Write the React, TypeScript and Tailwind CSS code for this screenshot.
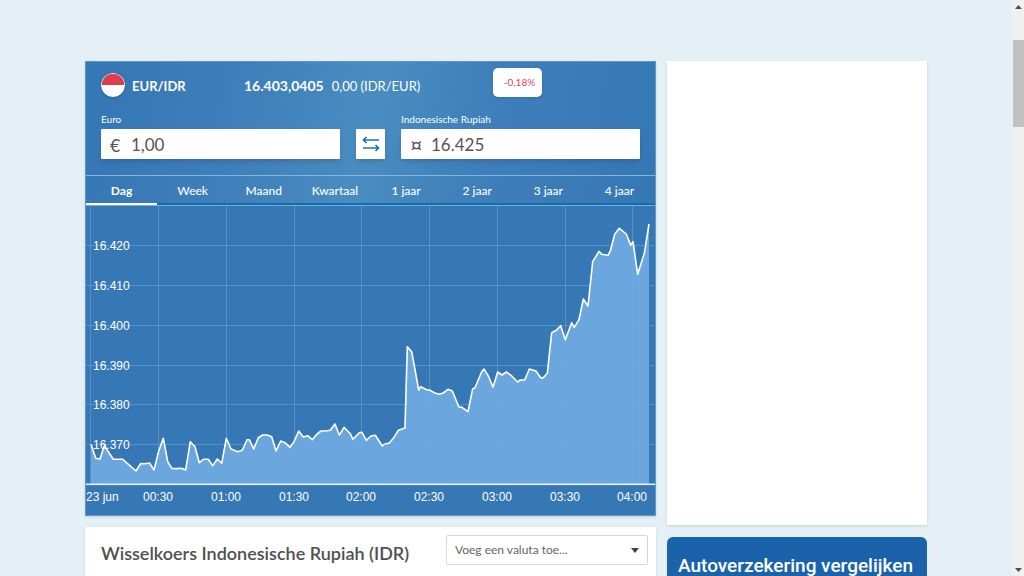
import React, { useState } from "react";

const periods = ["Dag", "Week", "Maand", "Kwartaal", "1 jaar", "2 jaar", "3 jaar", "4 jaar"];

const yTicks = [
  { y: 245, label: "16.420" },
  { y: 285, label: "16.410" },
  { y: 325, label: "16.400" },
  { y: 365, label: "16.390" },
  { y: 404, label: "16.380" },
  { y: 444, label: "16.370" },
];

const xTicks = [
  { x: 90, label: "" },
  { x: 158, label: "00:30" },
  { x: 226, label: "01:00" },
  { x: 294, label: "01:30" },
  { x: 361, label: "02:00" },
  { x: 429, label: "02:30" },
  { x: 497, label: "03:00" },
  { x: 565, label: "03:30" },
  { x: 632, label: "04:00" },
];

const rateLine =
  "91,444.3 95.7,458.3 100,459 104.3,445.7 113.3,459.3 122.7,459.3 136,471 140.7,463.5 145,463.7 149.5,463 154,470 " +
  "158.5,451.7 163.3,438.3 167.7,461.7 172,468.5 176.7,468.6 181.5,468.3 185.7,470 190.3,441.7 195,446.7 199.3,462.7 " +
  "203.7,459.2 208.3,459.2 212.7,465.7 217.3,459 221.7,463.3 226.3,438.3 231,449 237.7,451.7 242.3,450.3 247,439.7 " +
  "249.3,439.7 253.7,449 258.3,437.7 262.7,435 267.3,435 271.7,436.7 276,451 280.7,441 285,442.7 290,447.3 294,441.7 " +
  "298.7,431 303.3,437 307.7,435.7 312.3,439.7 316.7,434.3 321,431 325.7,431 330.3,430.3 335,424 339.3,435 344,427.3 " +
  "350.3,433.7 353,439.3 359.3,432.7 362,432.3 366.3,440.3 371,436 375.3,435.3 382.3,446 384.7,444 389.3,443 " +
  "393.3,438.3 398.3,430.3 405,428 407.3,346.7 411.7,351.7 418.7,390 420.7,386.7 426.7,389.7 430,390.3 434.3,392.7 " +
  "439,394.3 443.3,393 448,389.3 452.3,391 459,407.3 461.3,407 468,411.7 472.7,388.7 475,387.7 481.7,371.7 484,369 " +
  "488.7,376.7 493,387.3 497.7,372 502,375 506.3,372 511,375.3 517.7,382 520.3,380 524.7,380 529.3,369 536,371 " +
  "540.3,377.3 542.7,378.3 547.3,373.3 551.7,332.7 556.3,330.3 560.7,325.7 565.3,339.7 571.7,322.7 574.3,327.3 " +
  "579,319.7 583.3,299 588,306 592.7,261.7 599,251.3 601.7,254.3 608,255.3 610.3,251 614.7,234.3 619.3,228.3 " +
  "626.3,234 630.7,245.3 633,241.7 637.7,274.3 644.3,253.3 649,224";

function RateChart() {
  return (
    <svg
      viewBox="86 206 569 309"
      className="block w-full bg-[#3677b5] font-['Liberation_Sans',sans-serif] text-[12px]"
      role="img"
      aria-label="Koers EUR/IDR"
    >
      <g stroke="#7fb0dc" strokeOpacity="0.45">
        {yTicks.map((t) => (
          <line key={t.y} x1="86" x2="654" y1={t.y + 0.5} y2={t.y + 0.5} />
        ))}
        {xTicks.map((t) => (
          <line key={t.x} x1={t.x + 0.5} x2={t.x + 0.5} y1="206" y2="484" />
        ))}
      </g>
      <polygon points={`91,484 ${rateLine} 649,484`} fill="#70aae3" fillOpacity="0.92" />
      <polyline points={rateLine} fill="none" stroke="#fff" strokeWidth="1.6" strokeLinejoin="round" />
      <rect x="86" y="483.5" width="569" height="1.6" fill="#e8f1f8" />
      <g fill="#fff">
        {yTicks.map((t) => (
          <text key={t.y} x="93" y={t.y + 5}>{t.label}</text>
        ))}
        <text x="86" y="501">23 jun</text>
        {xTicks.map((t) => (
          <text key={t.x} x={t.x} y="501" textAnchor="middle">{t.label}</text>
        ))}
      </g>
    </svg>
  );
}

function SwapIcon() {
  return (
    <svg width="18" height="16" viewBox="0 0 18 16" fill="none" stroke="#1a73b5" strokeWidth="1.7">
      <path d="M17 4H1.5M4.5 1 1.5 4 4.5 7" />
      <path d="M1 12h15.5M13.5 9 16.5 12 13.5 15" />
    </svg>
  );
}

function Converter() {
  const [period, setPeriod] = useState("Dag");

  return (
    <section className="border border-[#5f9ac9] bg-[#3677b5] text-white shadow-sm">
      <div className="bg-[linear-gradient(100deg,#3677b5_5%,#3f7fbb_28%,#498dc0_50%,#3f7fbb_68%,#3677b5_98%)]">
        <div className="px-[15px] pt-1 pb-4">
          <div className="flex h-[38px] items-center">
            <svg width="24" height="24" viewBox="0 0 24 24" className="rounded-full shadow">
              <circle cx="12" cy="12" r="12" fill="#fff" />
              <path d="M.7 12a11.3 11.3 0 0 1 22.6 0z" fill="#dc3e50" />
            </svg>
            <div className="ml-[7px] flex items-baseline pt-[2px] text-[13px]">
              <h2 className="w-[112px] font-bold">EUR/IDR</h2>
              <strong className="text-[14px]">16.403,0405</strong>
              <span className="ml-2">0,00 (IDR/EUR)</span>
            </div>
            <span className="mr-[98px] mb-[6px] ml-auto flex h-[29px] w-[49px] items-center justify-center rounded-[5px] bg-white pl-1 text-[10px] text-[#d8485c] shadow">
              -0,18%
            </span>
          </div>

          <div className="mt-2 flex items-end">
            <div className="min-w-0 flex-1">
              <label htmlFor="amount-eur" className="block h-[17px] text-[10px] leading-[14px]">Euro</label>
              <div className="flex h-[30px] items-center rounded-[1px] bg-white pt-[2px] pl-[9px] text-[17px] text-[#545454] shadow-md">
                <span className="w-[21px] text-[18px]">€</span>
                <input id="amount-eur" defaultValue="1,00" className="min-w-0 flex-1 outline-none" />
              </div>
            </div>
            <button
              type="button"
              aria-label="Wissel valuta om"
              className="mx-4 flex h-[30px] w-[29px] cursor-pointer items-center justify-center bg-white shadow-md"
            >
              <SwapIcon />
            </button>
            <div className="min-w-0 flex-1">
              <label htmlFor="amount-idr" className="block h-[17px] text-[10px] leading-[14px]">Indonesische Rupiah</label>
              <div className="flex h-[30px] items-center rounded-[1px] bg-white pt-[2px] pl-[9px] text-[17px] text-[#545454] shadow-md">
                <span className="w-[21px] text-[22px] leading-[22px]">¤</span>
                <input id="amount-idr" defaultValue="16.425" className="min-w-0 flex-1 outline-none" />
              </div>
            </div>
          </div>
        </div>

        {/* Period tabs */}
        <div className="flex border-t border-b border-t-[#8ab4d8] border-b-[#78acd4]">
          {periods.map((p) => (
            <button
              key={p}
              type="button"
              onClick={() => setPeriod(p)}
              className={`h-[29px] flex-1 cursor-pointer border-b-2 pt-[2px] text-[12px] leading-[25px] ${
                period === p ? "border-white font-bold" : "border-[#0f6fb0] font-medium"
              }`}
            >
              {p}
            </button>
          ))}
        </div>
      </div>
      <RateChart />
    </section>
  );
}

function PageScrollbar() {
  return (
    <div aria-hidden="true" className="flex w-3 shrink-0 flex-col items-center bg-[#f0f0f0]">
      <svg width="7" height="4" viewBox="0 0 7 4" className="mt-[5px]">
        <path d="M0 4 3.5 0 7 4z" fill="#505050" />
      </svg>
      <div className="mt-[31px] h-[87px] w-[11px] self-end bg-[#c1c1c1]" />
      <svg width="7" height="4" viewBox="0 0 7 4" className="mt-auto mb-[4px]">
        <path d="M0 0h7L3.5 4z" fill="#505050" />
      </svg>
    </div>
  );
}

export default function App() {
  return (
    <div className="flex h-screen overflow-hidden bg-[#e4f0f6] font-['Lato',sans-serif]">
      <main className="min-w-0 flex-1">
        <div className="mx-auto flex max-w-[842px] gap-[11px] pt-[61px]">
          <div className="min-w-0 flex-1">
            <Converter />
            <section className="mt-[11px] flex items-start bg-white px-2 pt-2 pb-20 pl-4 shadow-sm">
              <h1 className="flex-1 pt-[6px] text-[18px] leading-[24px] font-semibold whitespace-nowrap text-[#505050]">
                Wisselkoers Indonesische Rupiah (IDR)
              </h1>
              <div className="flex h-[30px] w-[202px] items-center rounded-[2px] border border-[#d0dade] pr-2">
                <select
                  aria-label="Voeg een valuta toe"
                  className="min-w-0 flex-1 appearance-none pl-2 text-[12px] text-[#666] outline-none"
                >
                  <option>Voeg een valuta toe...</option>
                </select>
                <svg width="8" height="5" viewBox="0 0 8 5" className="pointer-events-none">
                  <path d="M0 0h8L4 5z" fill="#444" />
                </svg>
              </div>
            </section>
          </div>

          <aside className="w-[260px] shrink-0">
            <div className="h-[464px] bg-white shadow-sm" />
            <div className="mt-3 rounded-md bg-[#1a63ab] px-[11px] pt-4 pb-20">
              <h2 className="font-['Roboto',sans-serif] text-[19px] leading-[26px] font-medium whitespace-nowrap text-white">
                Autoverzekering vergelijken
              </h2>
            </div>
          </aside>
        </div>
      </main>
      <PageScrollbar />
    </div>
  );
}
